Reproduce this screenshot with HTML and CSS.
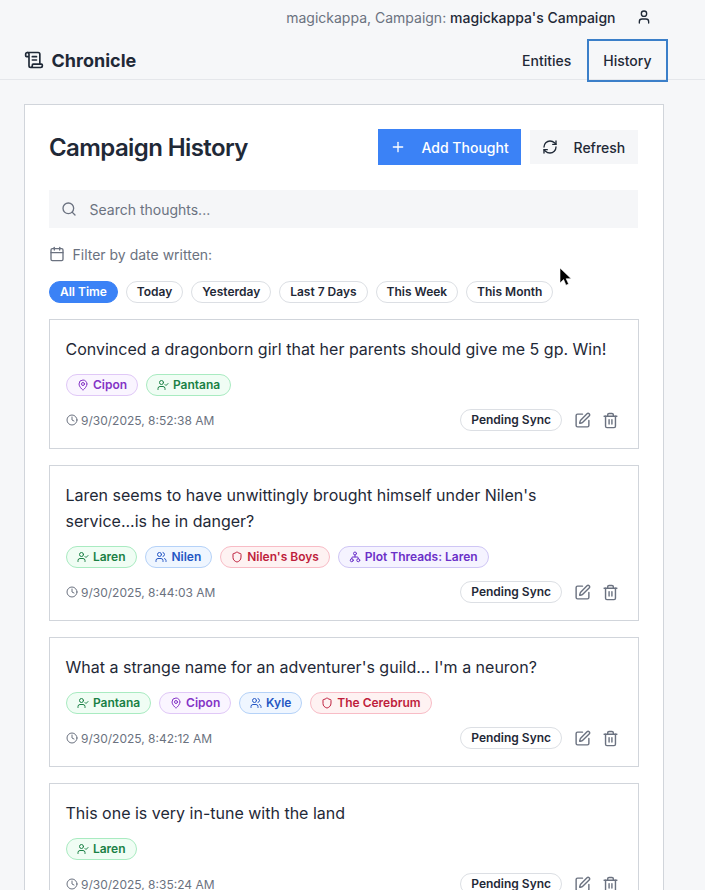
FILE: index.html
```html
<!DOCTYPE html>
<html lang="en">
<head>
<meta charset="utf-8">
<title>Chronicle</title>
<link rel="stylesheet" href="styles.css">
</head>
<body>
<svg class="defs" width="0" height="0" aria-hidden="true">
  <symbol id="i-scroll" viewBox="0 0 24 24"><path d="M15 12h-5"/><path d="M15 8h-5"/><path d="M19 17V5a2 2 0 0 0-2-2H4"/><path d="M8 21h12a2 2 0 0 0 2-2v-1a1 1 0 0 0-1-1H11a1 1 0 0 0-1 1v1a2 2 0 1 1-4 0V5a2 2 0 1 0-4 0v2a1 1 0 0 0 1 1h3"/></symbol>
  <symbol id="i-user" viewBox="0 0 24 24"><path d="M19 21v-2a4 4 0 0 0-4-4H9a4 4 0 0 0-4 4v2"/><circle cx="12" cy="7" r="4"/></symbol>
  <symbol id="i-plus" viewBox="0 0 24 24"><path d="M5 12h14"/><path d="M12 5v14"/></symbol>
  <symbol id="i-refresh" viewBox="0 0 24 24"><path d="M3 12a9 9 0 0 1 9-9 9.75 9.75 0 0 1 6.74 2.74L21 8"/><path d="M21 3v5h-5"/><path d="M21 12a9 9 0 0 1-9 9 9.75 9.75 0 0 1-6.74-2.74L3 16"/><path d="M8 16H3v5"/></symbol>
  <symbol id="i-search" viewBox="0 0 24 24"><path d="m21 21-4.34-4.34"/><circle cx="11" cy="11" r="8"/></symbol>
  <symbol id="i-calendar" viewBox="0 0 24 24"><path d="M8 2v4"/><path d="M16 2v4"/><rect x="3" y="4" width="18" height="18" rx="2"/><path d="M3 10h18"/></symbol>
  <symbol id="i-pin" viewBox="0 0 24 24"><path d="M20 10c0 4.993-5.539 10.193-7.399 11.799a1 1 0 0 1-1.202 0C9.539 20.193 4 14.993 4 10a8 8 0 0 1 16 0"/><circle cx="12" cy="10" r="3"/></symbol>
  <symbol id="i-usercheck" viewBox="0 0 24 24"><path d="M16 21v-2a4 4 0 0 0-4-4H6a4 4 0 0 0-4 4v2"/><circle cx="9" cy="7" r="4"/><polyline points="16 11 18 13 22 9"/></symbol>
  <symbol id="i-users" viewBox="0 0 24 24"><path d="M16 21v-2a4 4 0 0 0-4-4H6a4 4 0 0 0-4 4v2"/><circle cx="9" cy="7" r="4"/><path d="M22 21v-2a4 4 0 0 0-3-3.87"/><path d="M16 3.13a4 4 0 0 1 0 7.75"/></symbol>
  <symbol id="i-shield" viewBox="0 0 24 24"><path d="M20 13c0 5-3.5 7.5-7.66 8.95a1 1 0 0 1-.67-.01C7.5 20.5 4 18 4 13V6a1 1 0 0 1 1-1c2 0 4.5-1.2 6.24-2.72a1.17 1.17 0 0 1 1.52 0C14.51 3.81 17 5 19 5a1 1 0 0 1 1 1z"/></symbol>
  <symbol id="i-threads" viewBox="0 0 24 24"><circle cx="12" cy="5" r="3"/><circle cx="5.5" cy="18.5" r="3"/><circle cx="18.5" cy="18.5" r="3"/><path d="M12 8v4"/><path d="M5.5 15.5v-1.5a2 2 0 0 1 2-2h9a2 2 0 0 1 2 2v1.5"/></symbol>
  <symbol id="i-clock" viewBox="0 0 24 24"><circle cx="12" cy="12" r="10"/><polyline points="12 6 12 12 16 14"/></symbol>
  <symbol id="i-pen" viewBox="0 0 24 24"><path d="M12 3H5a2 2 0 0 0-2 2v14a2 2 0 0 0 2 2h14a2 2 0 0 0 2-2v-7"/><path d="M18.375 2.625a1 1 0 0 1 3 3l-9.013 9.014a2 2 0 0 1-.853.505l-2.873.84a.5.5 0 0 1-.62-.62l.84-2.873a2 2 0 0 1 .506-.852z"/></symbol>
  <symbol id="i-trash" viewBox="0 0 24 24"><path d="M3 6h18"/><path d="M19 6v14c0 1-1 2-2 2H7c-1 0-2-1-2-2V6"/><path d="M8 6V4c0-1 1-2 2-2h4c1 0 2 1 2 2v2"/><line x1="10" y1="11" x2="10" y2="17"/><line x1="14" y1="11" x2="14" y2="17"/></symbol>
</svg>

<header class="site-header">
  <div class="account-bar">
    <span class="account-text">magickappa, Campaign: <span class="account-campaign">magickappa's Campaign</span></span>
    <button class="account-btn" type="button"><svg class="icon icon-16"><use href="#i-user"/></svg></button>
  </div>
  <div class="nav-bar">
    <a class="brand"><svg class="icon icon-20"><use href="#i-scroll"/></svg><span>Chronicle</span></a>
    <nav class="nav-links">
      <a class="nav-link">Entities</a>
      <a class="nav-link nav-link-active">History</a>
    </nav>
  </div>
</header>

<main class="panel">
  <div class="panel-head">
    <h1 class="panel-title">Campaign History</h1>
    <div class="panel-actions">
      <button class="btn btn-primary" type="button"><svg class="icon icon-16"><use href="#i-plus"/></svg>Add Thought</button>
      <button class="btn btn-secondary" type="button"><svg class="icon icon-16"><use href="#i-refresh"/></svg>Refresh</button>
    </div>
  </div>

  <label class="search">
    <svg class="icon icon-16"><use href="#i-search"/></svg>
    <span class="search-placeholder">Search thoughts...</span>
  </label>

  <div class="filter-label"><svg class="icon icon-16"><use href="#i-calendar"/></svg>Filter by date written:</div>
  <div class="filters">
    <span class="pill pill-active">All Time</span>
    <span class="pill">Today</span>
    <span class="pill">Yesterday</span>
    <span class="pill">Last 7 Days</span>
    <span class="pill">This Week</span>
    <span class="pill">This Month</span>
  </div>

  <div class="thoughts">
    <article class="thought">
      <p class="thought-text">Convinced a dragonborn girl that her parents should give me 5 gp. Win!</p>
      <div class="tags">
        <span class="tag tag-purple"><svg class="icon icon-12"><use href="#i-pin"/></svg>Cipon</span>
        <span class="tag tag-green"><svg class="icon icon-12"><use href="#i-usercheck"/></svg>Pantana</span>
      </div>
      <div class="thought-foot">
        <span class="stamp"><svg class="icon icon-12"><use href="#i-clock"/></svg>9/30/2025, 8:52:38 AM</span>
        <div class="thought-actions">
          <span class="pill">Pending Sync</span>
          <svg class="icon icon-17 action"><use href="#i-pen"/></svg>
          <svg class="icon icon-17 action"><use href="#i-trash"/></svg>
        </div>
      </div>
    </article>

    <article class="thought">
      <p class="thought-text">Laren seems to have unwittingly brought himself under Nilen's service...is he in danger?</p>
      <div class="tags">
        <span class="tag tag-green"><svg class="icon icon-12"><use href="#i-usercheck"/></svg>Laren</span>
        <span class="tag tag-blue"><svg class="icon icon-12"><use href="#i-users"/></svg>Nilen</span>
        <span class="tag tag-red"><svg class="icon icon-12"><use href="#i-shield"/></svg>Nilen's Boys</span>
        <span class="tag tag-violet"><svg class="icon icon-12"><use href="#i-threads"/></svg>Plot Threads: Laren</span>
      </div>
      <div class="thought-foot">
        <span class="stamp"><svg class="icon icon-12"><use href="#i-clock"/></svg>9/30/2025, 8:44:03 AM</span>
        <div class="thought-actions">
          <span class="pill">Pending Sync</span>
          <svg class="icon icon-17 action"><use href="#i-pen"/></svg>
          <svg class="icon icon-17 action"><use href="#i-trash"/></svg>
        </div>
      </div>
    </article>

    <article class="thought">
      <p class="thought-text">What a strange name for an adventurer's guild... I'm a neuron?</p>
      <div class="tags">
        <span class="tag tag-green"><svg class="icon icon-12"><use href="#i-usercheck"/></svg>Pantana</span>
        <span class="tag tag-purple"><svg class="icon icon-12"><use href="#i-pin"/></svg>Cipon</span>
        <span class="tag tag-blue"><svg class="icon icon-12"><use href="#i-users"/></svg>Kyle</span>
        <span class="tag tag-red"><svg class="icon icon-12"><use href="#i-shield"/></svg>The Cerebrum</span>
      </div>
      <div class="thought-foot">
        <span class="stamp"><svg class="icon icon-12"><use href="#i-clock"/></svg>9/30/2025, 8:42:12 AM</span>
        <div class="thought-actions">
          <span class="pill">Pending Sync</span>
          <svg class="icon icon-17 action"><use href="#i-pen"/></svg>
          <svg class="icon icon-17 action"><use href="#i-trash"/></svg>
        </div>
      </div>
    </article>

    <article class="thought">
      <p class="thought-text">This one is very in-tune with the land</p>
      <div class="tags">
        <span class="tag tag-green"><svg class="icon icon-12"><use href="#i-usercheck"/></svg>Laren</span>
      </div>
      <div class="thought-foot">
        <span class="stamp"><svg class="icon icon-12"><use href="#i-clock"/></svg>9/30/2025, 8:35:24 AM</span>
        <div class="thought-actions">
          <span class="pill">Pending Sync</span>
          <svg class="icon icon-17 action"><use href="#i-pen"/></svg>
          <svg class="icon icon-17 action"><use href="#i-trash"/></svg>
        </div>
      </div>
    </article>
  </div>
</main>

<svg class="cursor" width="13" height="20" viewBox="0 0 13 20" aria-hidden="true"><path d="M1 1v15l3.6-3.4 2.4 5.6 2.6-1.1-2.4-5.4h5z" fill="#000" stroke="#fff" stroke-width="0.6"/></svg>
</body>
</html>
```
FILE: styles.css
```css
* { box-sizing: border-box; }
html, body { height: 890px; overflow: hidden; }
body {
  margin: 0;
  background: #f6f7f9;
  color: #1f2937;
  font-family: Inter, "Liberation Sans", sans-serif;
  position: relative;
}
.defs { position: absolute; }
.icon {
  fill: none;
  stroke: currentColor;
  stroke-width: 2;
  stroke-linecap: round;
  stroke-linejoin: round;
  flex: none;
  display: block;
}
.icon-12 { width: 12px; height: 12px; }
.icon-16 { width: 16px; height: 16px; }
.icon-17 { width: 17px; height: 17px; }
.icon-20 { width: 20px; height: 20px; }

.site-header { border-bottom: 1px solid #e5e7eb; height: 80px; }
.account-bar {
  height: 34px;
  display: flex;
  justify-content: flex-end;
  align-items: center;
  gap: 20.5px;
  padding-right: 53px;
}
.account-text { font-size: 14px; color: #6b7280; }
.account-campaign { color: #1f2937; font-weight: 500; }
.account-btn { border: 0; background: none; padding: 0; color: #1f2937; }
.nav-bar {
  display: flex;
  justify-content: space-between;
  align-items: center;
  padding: 3px 37px 0 24px;
  height: 49px;
}
.brand {
  display: flex;
  align-items: center;
  gap: 7.5px;
  font-size: 18px;
  font-weight: 700;
  color: #1f2937;
}
.nav-links { display: flex; align-items: center; gap: 0; }
.nav-link {
  font-size: 14px;
  font-weight: 500;
  color: #1f2937;
  padding: 0 15.5px 0 16px;
  height: 43px;
  display: flex;
  align-items: center;
}
.nav-link-active { padding: 0 16.5px; outline: 2px solid #3b7fc9; outline-offset: -2px; }

.panel {
  margin: 24px 0 0 24px;
  width: 640px;
  background: #fff;
  border: 1px solid #d1d5db;
  padding: 24px;
}
.panel-head {
  display: flex;
  justify-content: space-between;
  align-items: center;
  height: 36px;
}
.panel-title { margin: 0; font-size: 24px; font-weight: 600; letter-spacing: -0.6px; color: #1f2937; }
.panel-actions { display: flex; align-items: center; gap: 9px; margin-right: 1px; }
.btn {
  border: 0;
  display: flex;
  align-items: center;
  font: 500 14px Inter, "Liberation Sans", sans-serif;
  gap: 15.5px;
  white-space: nowrap;
}
.btn-primary { background: #3b82f6; color: #fff; height: 36px; padding: 0 12px; width: 143px; }
.btn-secondary { background: #f5f6f8; color: #1f2937; height: 34px; padding: 0 12px; width: 108px; }

.search {
  margin: 25px 1px 0 0;
  height: 38px;
  background: #f5f6f8;
  display: flex;
  align-items: center;
  gap: 12.5px;
  padding-left: 12px;
  color: #6b7280;
}
.search-placeholder { font-size: 14px; }

.filter-label {
  margin-top: 17px;
  height: 18px;
  display: flex;
  align-items: center;
  gap: 7.5px;
  font-size: 14px;
  color: #6b7280;
}
.filters { display: flex; gap: 8px; margin-top: 18px; }
.pill {
  display: inline-flex;
  align-items: center;
  height: 22px;
  padding: 0 9.95px 1px;
  border: 1px solid #dcdfe4;
  border-radius: 999px;
  font-size: 12px;
  font-weight: 600;
  color: #1f2937;
  background: #fff;
  white-space: nowrap;
}
.pill-active { background: #3b82f6; border-color: #3b82f6; color: #fff; }

.thoughts { display: flex; flex-direction: column; gap: 16px; margin-top: 16px; }
.thought { border: 1px solid #d1d5db; padding: 16px 16px 17px; background: #fff; }
.thought-text { margin: 0 0 0 -0.5px; font-size: 16px; line-height: 26px; color: #1f2937; max-width: 500px; }
.thought:first-child .thought-text { max-width: none; }
.tags { display: flex; gap: 8px; margin-top: 12px; }
.tag {
  display: inline-flex;
  align-items: center;
  gap: 4px;
  height: 22px;
  padding: 0 9.95px 1px;
  border: 1px solid;
  border-radius: 999px;
  font-size: 12px;
  font-weight: 600;
  white-space: nowrap;
}
.tag-purple { background: #faf5ff; border-color: #e0c8f7; color: #8433c6; }
.tag-green { background: #f0fdf4; border-color: #a9ebc1; color: #1a8045; }
.tag-blue { background: #eff6ff; border-color: #b5d2f8; color: #2456c4; }
.tag-red { background: #fef2f2; border-color: #f8bcc6; color: #be1e3c; }
.tag-violet { background: #f5f3ff; border-color: #cfc6f5; color: #6b30c8; }

.thought-foot {
  display: flex;
  justify-content: space-between;
  align-items: center;
  margin-top: 13px;
}
.stamp {
  display: flex;
  align-items: center;
  gap: 3px;
  font-size: 12px;
  color: #6b7280;
}
.thought-actions { display: flex; align-items: center; gap: 11px; padding-right: 3px; }
.thought-actions .pill { margin-right: 1px; }
.action { color: #6b7280; }

.cursor { position: absolute; left: 559px; top: 267px; }
```
